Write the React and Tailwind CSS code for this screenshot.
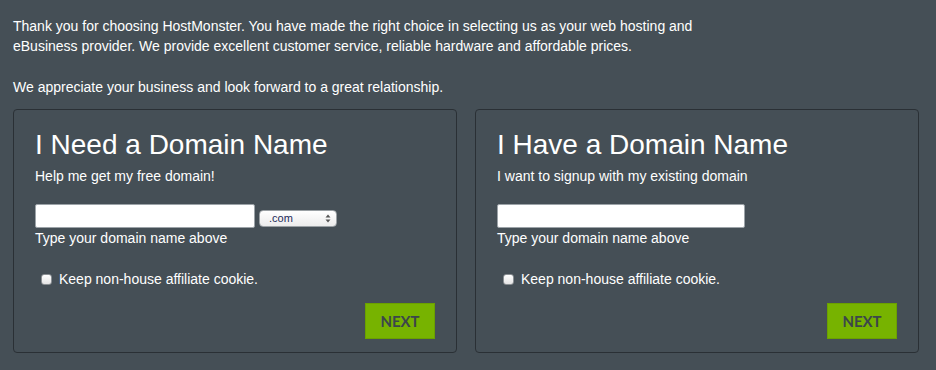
import React from 'react';

function Checkbox() {
    return (
        <span className="inline-block w-[11px] h-[11px] rounded-[3px] bg-gradient-to-b from-white to-[#e4e4e4] border border-[#8a8f93] shrink-0" />
    );
}

function SelectBox() {
    return (
        <div className="w-[78px] h-[17px] mt-[6px] rounded-[4px] bg-gradient-to-b from-white to-[#ececec] border border-[#9aa0a4] flex items-center justify-between pl-[9px] pr-[5px]">
            <span className="text-[11px] leading-none text-[#1c2a5a]">.com</span>
            <svg width="6" height="9" viewBox="0 0 6 9">
                <path d="M3 0.5 L5.5 3.5 L0.5 3.5 Z" fill="#555" />
                <path d="M3 8.5 L5.5 5.5 L0.5 5.5 Z" fill="#555" />
            </svg>
        </div>
    );
}

function DomainPanel({ title, subtitle, inputWidth, withSelect }) {
    return (
        <div className="flex-1 h-[244px] border border-[#2a3035] rounded-[4px] pt-[19px] px-[21px] pb-[13px] flex flex-col">
            <h2 className="text-[28px] leading-[32px] text-white">{title}</h2>
            <p className="mt-[5px] text-[14px] leading-[20px] text-white">{subtitle}</p>
            <div className="mt-[18px] flex items-start gap-[4px]">
                <div className={`${inputWidth} h-[24px] bg-white border border-[#9ca3a8] rounded-[2px]`} />
                {withSelect && <SelectBox />}
            </div>
            <p className="text-[14px] leading-[20px] text-white">Type your domain name above</p>
            <div className="mt-[21px] flex items-center h-[20px] pl-[6px] gap-[7px]">
                <Checkbox />
                <span className="text-[14px] text-white">Keep non-house affiliate cookie.</span>
            </div>
            <div className="mt-auto flex justify-end">
                <button className="w-[70px] h-[36px] bg-[#77b300] border border-[#6ba100] text-[#3c464b] text-[15px] font-bold font-['Lato',sans-serif]">
                    NEXT
                </button>
            </div>
        </div>
    );
}

export default function App() {
    return (
        <div className="w-[936px] h-[370px] bg-[#454f56] font-['Liberation_Sans',Arial,sans-serif] px-[13px] pt-[16px] overflow-hidden">
            <p className="text-[14px] leading-[20px] text-white">
                Thank you for choosing HostMonster. You have made the right choice in selecting us as your web hosting and
                <br />
                eBusiness provider. We provide excellent customer service, reliable hardware and affordable prices.
            </p>
            <p className="mt-[21px] text-[14px] leading-[20px] text-white">
                We appreciate your business and look forward to a great relationship.
            </p>
            <div className="mt-[12px] flex gap-[18px] w-[906px]">
                <DomainPanel
                    title="I Need a Domain Name"
                    subtitle="Help me get my free domain!"
                    inputWidth="w-[220px]"
                    withSelect
                />
                <DomainPanel
                    title="I Have a Domain Name"
                    subtitle="I want to signup with my existing domain"
                    inputWidth="w-[248px]"
                />
            </div>
        </div>
    );
}
